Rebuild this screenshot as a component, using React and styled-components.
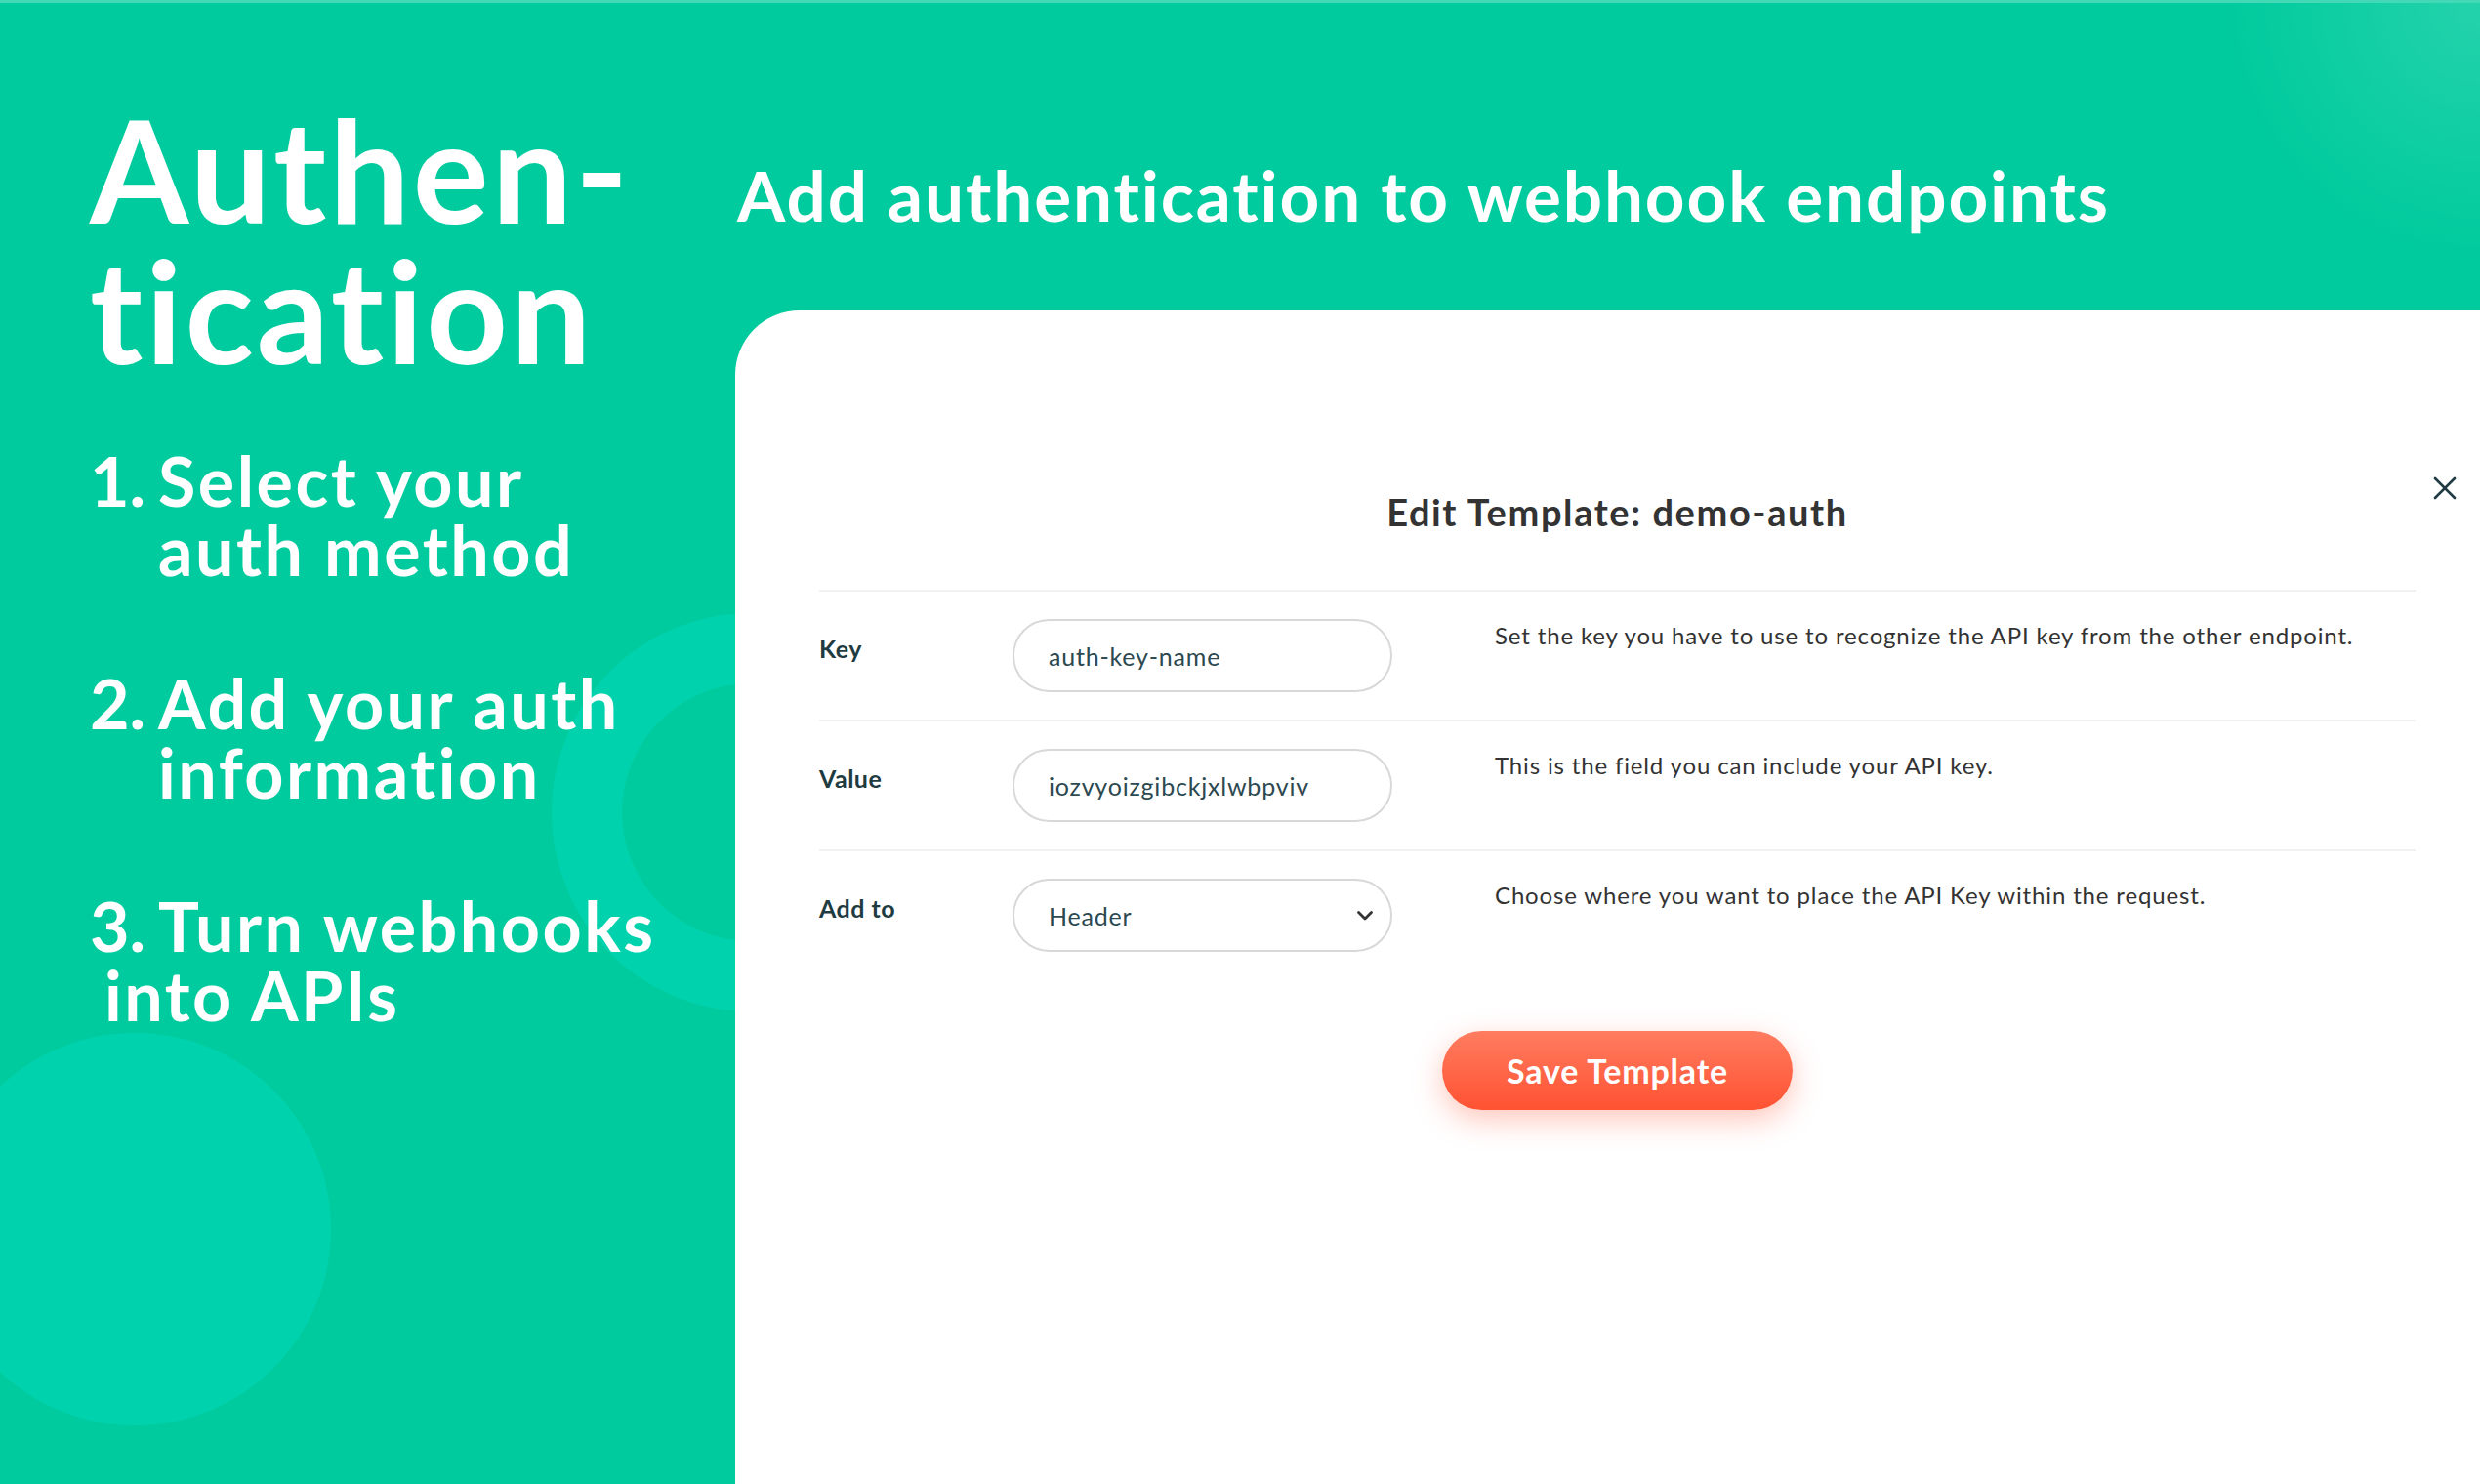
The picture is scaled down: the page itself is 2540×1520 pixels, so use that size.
import React from 'react'
import styled, { createGlobalStyle } from 'styled-components'

const colors = {
  green: '#00cb9e',
  greenLight: '#00d4b0',
  white: '#ffffff',
  title: '#333333',
  label: '#1e3b41',
  inputText: '#2d4950',
  border: '#d8d8d8',
  divider: '#f1f1f1',
  orangeTop: '#ff7c60',
  orangeBottom: '#ff5232',
}

const fields = [
  {
    id: 'key',
    label: 'Key',
    value: 'auth-key-name',
    help: 'Set the key you have to use to recognize the API key from the other endpoint.',
  },
  {
    id: 'value',
    label: 'Value',
    value: 'iozvyoizgibckjxlwbpviv',
    help: 'This is the field you can include your API key.',
  },
  {
    id: 'addTo',
    label: 'Add to',
    value: 'Header',
    select: true,
    help: 'Choose where you want to place the API Key within the request.',
  },
]

// the third item wraps with a shallower indent in the original slide
const steps = [
  { n: '1.', lines: ['Select your', 'auth method'], hang: 70 },
  { n: '2.', lines: ['Add your auth', 'information'], hang: 70 },
  { n: '3.', lines: ['Turn webhooks', 'into APIs'], hang: 15 },
]

const GlobalStyle = createGlobalStyle`
  html, body {
    margin: 0;
    padding: 0;
    height: 100%;
    overflow: hidden;
  }
  body {
    font-family: Lato, "Open Sans", "Noto Sans", sans-serif;
    font-variant-ligatures: none;
  }
  * {
    box-sizing: border-box;
  }
`

function CloseIcon() {
  return (
    <svg width="26" height="26" viewBox="0 0 26 26" fill="none">
      <path d="M3 3L23 23M23 3L3 23" stroke={colors.label} strokeWidth="2.6" strokeLinecap="round" />
    </svg>
  )
}

function Chevron() {
  return (
    <svg width="18" height="12" viewBox="0 0 18 12" fill="none">
      <path d="M2.5 2.5L9 9L15.5 2.5" stroke="#333" strokeWidth="2.8" strokeLinecap="round" strokeLinejoin="round" />
    </svg>
  )
}

function App() {
  return (
    <>
      <GlobalStyle />
      <Page>
        <BigCircle />
        <Ring />
        <Intro>
          <BigTitle>Authen-<br />tication</BigTitle>
          <Steps>
            {steps.map((step) => (
              <Step key={step.n} $hang={step.hang}>
                <StepNumber>{step.n}</StepNumber>
                {step.lines[0]}
                <br />
                {step.lines[1]}
              </Step>
            ))}
          </Steps>
        </Intro>
        <Main>
          <Headline>Add authentication to webhook endpoints</Headline>
          <Card>
            <CloseButton aria-label="Close">
              <CloseIcon />
            </CloseButton>
            <CardBody>
              <CardTitle>Edit Template: demo-auth</CardTitle>
              <Form>
                {fields.map((field) => (
                  <FieldRow key={field.id}>
                    <FieldLabel>{field.label}</FieldLabel>
                    {field.select ? (
                      <SelectBox role="combobox">
                        <span>{field.value}</span>
                        <Chevron />
                      </SelectBox>
                    ) : (
                      <TextInput defaultValue={field.value} />
                    )}
                    <FieldHelp>{field.help}</FieldHelp>
                  </FieldRow>
                ))}
              </Form>
              <SaveButton>Save Template</SaveButton>
            </CardBody>
          </Card>
        </Main>
      </Page>
    </>
  )
}

export default App

const Page = styled.div`
  position: relative;
  overflow: hidden;
  display: grid;
  grid-template-columns: 753px 1fr;
  height: 100vh;
  min-height: 1520px;
  background:
    radial-gradient(circle at 100% 0%, rgba(255, 255, 255, 0.14) 0, rgba(255, 255, 255, 0) 260px),
    ${colors.green};
  border-top: 3px solid #43d9b6;
`

const BigCircle = styled.div`
  position: absolute;
  left: -63px;
  top: 1055px;
  width: 402px;
  height: 402px;
  border-radius: 50%;
  background: ${colors.greenLight};
  opacity: 0.85;
`

const Ring = styled.div`
  position: absolute;
  left: 565px;
  top: 625px;
  width: 408px;
  height: 408px;
  border-radius: 50%;
  border: 72px solid ${colors.greenLight};
  opacity: 0.85;
`

const Intro = styled.div`
  position: relative;
  padding: 98px 0 0 92px;
  color: ${colors.white};
`

const BigTitle = styled.h1`
  margin: 0;
  font-size: 146px;
  line-height: 144px;
  font-weight: 700;
  letter-spacing: 3px;
`

const Steps = styled.ol`
  list-style: none;
  margin: 68px 0 0;
  padding: 0;
  display: flex;
  flex-direction: column;
  gap: 86px;
`

const Step = styled.li`
  font-size: 70px;
  line-height: 71px;
  font-weight: 700;
  letter-spacing: 2.5px;
  white-space: nowrap;
  padding-left: ${(p) => p.$hang}px;
  text-indent: -${(p) => p.$hang}px;
`

const StepNumber = styled.span`
  display: inline-block;
  width: 70px;
  text-indent: 0;
  letter-spacing: 0;
`

const Main = styled.div`
  position: relative;
  display: flex;
  flex-direction: column;
  padding-top: 154px;
`

const Headline = styled.h2`
  margin: 0 0 75px 2px;
  color: ${colors.white};
  font-size: 71px;
  line-height: 86px;
  font-weight: 700;
  letter-spacing: 1.9px;
`

const Card = styled.section`
  position: relative;
  flex: 1;
  background: ${colors.white};
  border-top-left-radius: 66px;
  padding: 183px 66px 0 86px;
`

const CloseButton = styled.button`
  position: absolute;
  top: 169px;
  right: 23px;
  padding: 0;
  border: none;
  background: none;
  display: flex;
  cursor: pointer;
`

const CardBody = styled.div`
  display: flex;
  flex-direction: column;
  align-items: center;
`

const CardTitle = styled.h3`
  margin: 0 0 57px;
  color: ${colors.title};
  font-size: 38px;
  line-height: 46px;
  font-weight: 700;
  letter-spacing: 1.6px;
`

const Form = styled.div`
  width: 100%;
  display: flex;
  flex-direction: column;
`

const FieldRow = styled.div`
  display: grid;
  grid-template-columns: 198px 389px 1fr;
  align-items: start;
  padding: 28px 0;
  border-top: 2px solid ${colors.divider};
`

const FieldLabel = styled.label`
  padding-top: 13px;
  color: ${colors.label};
  font-size: 25px;
  line-height: 34px;
  font-weight: 700;
  letter-spacing: 0.5px;
`

const TextInput = styled.input`
  width: 100%;
  height: 75px;
  padding: 0 35px;
  border: 2px solid ${colors.border};
  border-radius: 38px;
  background: ${colors.white};
  color: ${colors.inputText};
  font-family: inherit;
  font-size: 25px;
  letter-spacing: 0.8px;
  outline: none;
`

const SelectBox = styled.div`
  width: 100%;
  height: 75px;
  display: flex;
  align-items: center;
  justify-content: space-between;
  padding: 0 17px 0 35px;
  border: 2px solid ${colors.border};
  border-radius: 38px;
  color: ${colors.inputText};
  font-size: 25px;
  letter-spacing: 0.8px;
`

const FieldHelp = styled.p`
  margin: 0 0 0 105px;
  color: ${colors.title};
  font-size: 24px;
  line-height: 34px;
  letter-spacing: 0.85px;
`

const SaveButton = styled.button`
  margin-top: 53px;
  width: 359px;
  height: 81px;
  border: none;
  border-radius: 41px;
  background: linear-gradient(180deg, ${colors.orangeTop} 0%, ${colors.orangeBottom} 100%);
  box-shadow: 0 10px 30px rgba(255, 92, 60, 0.35);
  color: ${colors.white};
  font-family: inherit;
  font-size: 34px;
  font-weight: 700;
  letter-spacing: 0.8px;
  cursor: pointer;
`
